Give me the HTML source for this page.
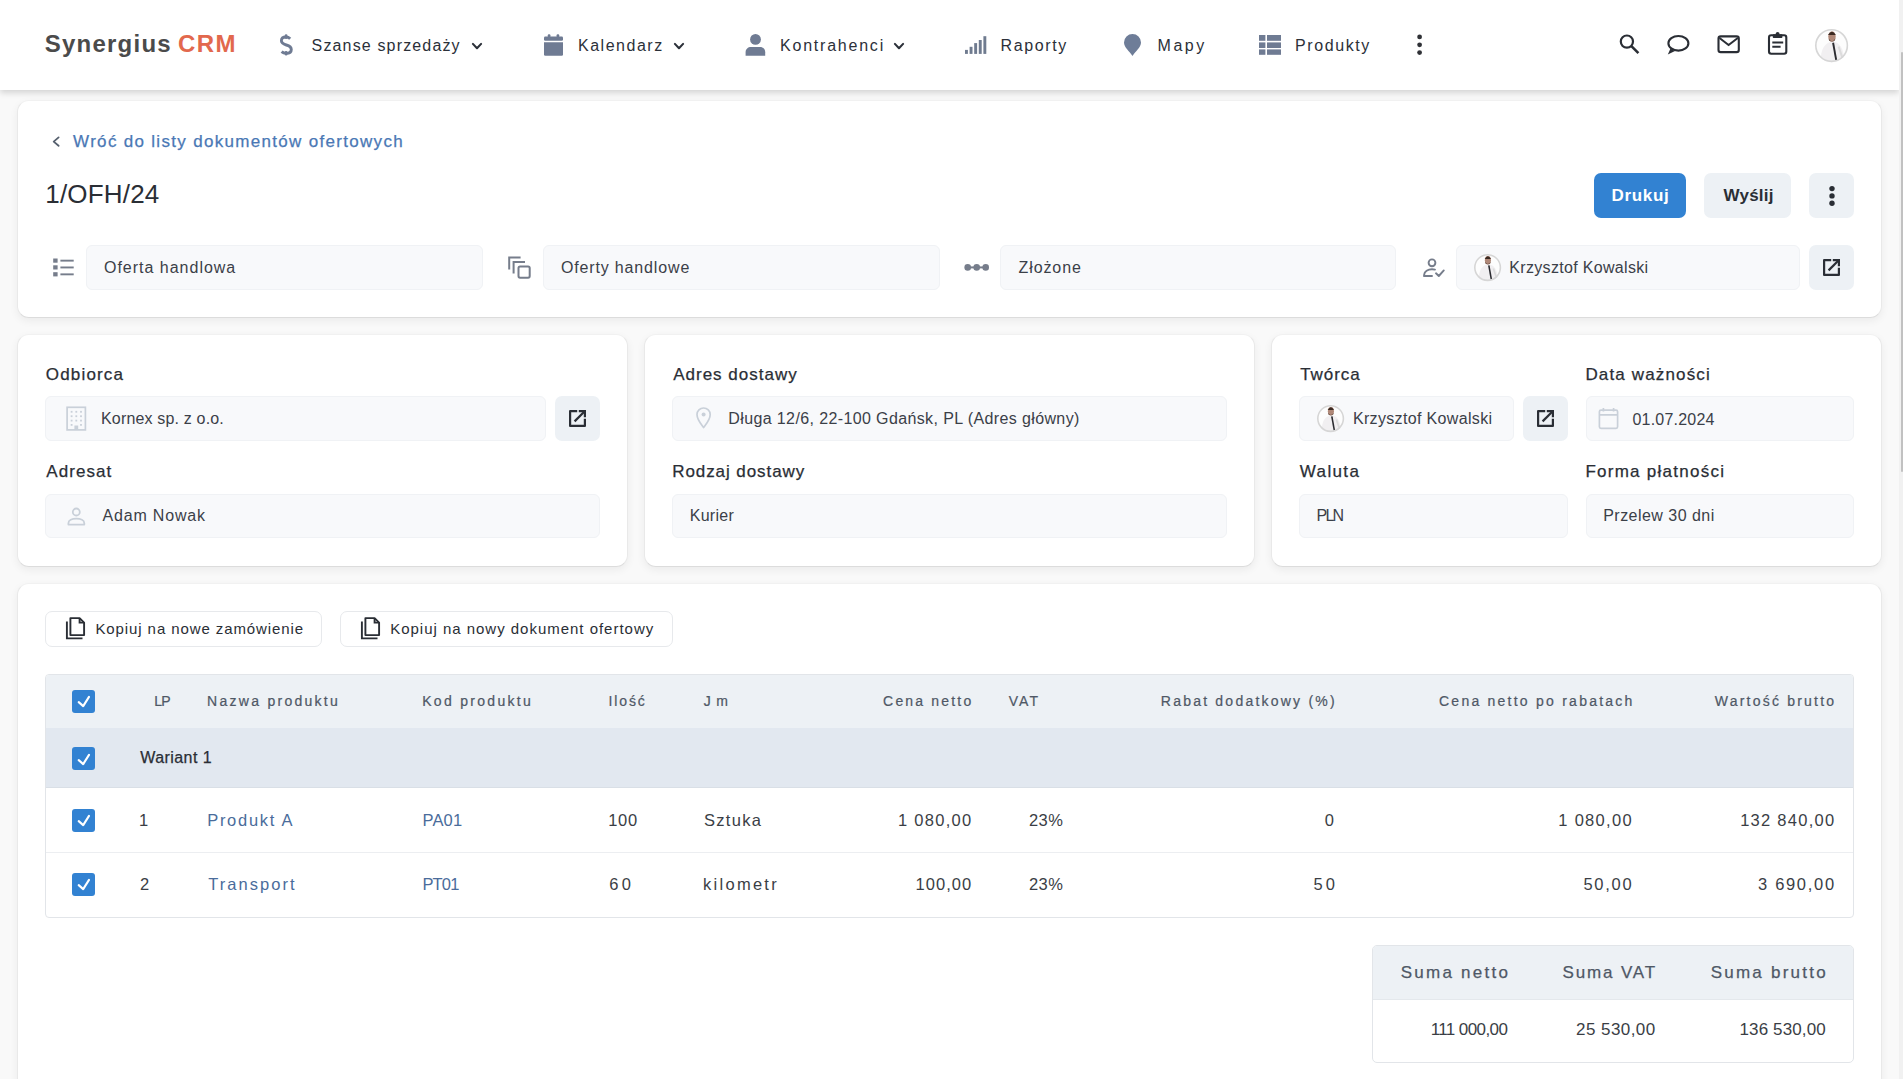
<!DOCTYPE html>
<html lang="pl">
<head>
<meta charset="utf-8">
<title>1/OFH/24 - Synergius CRM</title>
<style>
html,body{margin:0;padding:0;}
body{width:1903px;height:1079px;overflow:hidden;background:#f9f9f9;font-family:"Liberation Sans",sans-serif;position:relative;}
.a{position:absolute;box-sizing:border-box;}
.t{position:absolute;z-index:3;white-space:nowrap;line-height:1;font-family:"Liberation Sans",sans-serif;}
.hdr{left:0;top:0;width:1899px;height:90px;background:#fff;box-shadow:0 3px 6px rgba(0,0,0,0.15);z-index:2;}
.card{background:#fff;border:1px solid #e9e9e9;border-top-color:#f1f1f1;border-bottom-color:#dcdcdc;border-radius:12px;box-shadow:0 3px 8px rgba(0,0,0,0.06);}
.inp{background:#f8f9fb;border:1px solid #f0f2f5;border-radius:6px;}
.gbtn{background:#edf1f5;border-radius:6px;}
.cb{width:23px;height:23px;background:#3282d2;border-radius:3px;}
svg{position:absolute;overflow:visible;z-index:3;}
</style>
</head>
<body>
<!-- header -->
<div class="a hdr"></div>
<div class="a" style="left:1899px;top:0;width:4px;height:1079px;background:#f1f1f1;z-index:5"></div>
<div class="a" style="left:1901px;top:52px;width:2px;height:420px;background:#c1c1c1;border-radius:1px;z-index:6"></div>

<!-- cards -->
<div class="a card" style="left:17px;top:100px;width:1865px;height:218px"></div>
<div class="a card" style="left:17px;top:334px;width:611px;height:233px"></div>
<div class="a card" style="left:644px;top:334px;width:611px;height:233px"></div>
<div class="a card" style="left:1271px;top:334px;width:611px;height:233px"></div>
<div class="a card" style="left:17px;top:583px;width:1865px;height:600px"></div>

<!-- card1 buttons -->
<div class="a" style="left:1594px;top:173px;width:92px;height:45px;background:#3282d2;border-radius:7px"></div>
<div class="a gbtn" style="left:1704px;top:173px;width:87px;height:45px;border-radius:7px"></div>
<div class="a gbtn" style="left:1809px;top:173px;width:45px;height:45px;border-radius:7px"></div>
<!-- card1 inputs -->
<div class="a inp" style="left:86px;top:245px;width:397px;height:45px"></div>
<div class="a inp" style="left:543px;top:245px;width:397px;height:45px"></div>
<div class="a inp" style="left:1000px;top:245px;width:396px;height:45px"></div>
<div class="a inp" style="left:1456px;top:245px;width:344px;height:45px"></div>
<div class="a gbtn" style="left:1809px;top:245px;width:45px;height:45px;border-radius:7px"></div>

<!-- cards2 inputs -->
<div class="a inp" style="left:45px;top:396px;width:501px;height:45px"></div>
<div class="a gbtn" style="left:555px;top:396px;width:45px;height:45px;border-radius:7px"></div>
<div class="a inp" style="left:45px;top:494px;width:555px;height:44px"></div>
<div class="a inp" style="left:672px;top:396px;width:555px;height:45px"></div>
<div class="a inp" style="left:672px;top:494px;width:555px;height:44px"></div>
<div class="a inp" style="left:1299px;top:396px;width:215px;height:45px"></div>
<div class="a gbtn" style="left:1523px;top:396px;width:45px;height:45px;border-radius:7px"></div>
<div class="a inp" style="left:1586px;top:396px;width:268px;height:45px"></div>
<div class="a inp" style="left:1299px;top:494px;width:269px;height:44px"></div>
<div class="a inp" style="left:1586px;top:494px;width:268px;height:44px"></div>

<!-- card3 buttons -->
<div class="a" style="left:45px;top:611px;width:277px;height:36px;background:#fff;border:1px solid #e7e9ec;border-radius:7px"></div>
<div class="a" style="left:340px;top:611px;width:333px;height:36px;background:#fff;border:1px solid #e7e9ec;border-radius:7px"></div>

<!-- table -->
<div class="a" style="left:45px;top:674px;width:1809px;height:244px;border:1px solid #e2e5e9;border-radius:4px;overflow:hidden;background:#fff">
  <div class="a" style="left:0;top:0;width:100%;height:53px;background:#edf1f5"></div>
  <div class="a" style="left:0;top:53px;width:100%;height:60px;background:#e2e8f0;border-bottom:1px solid #d9dfe6"></div>
  <div class="a" style="left:0;top:177px;width:100%;height:1px;background:#eceef1"></div>
</div>
<div class="a cb" style="left:72px;top:690px"></div>
<div class="a cb" style="left:72px;top:747px"></div>
<div class="a cb" style="left:72px;top:809px"></div>
<div class="a cb" style="left:72px;top:873px"></div>

<!-- summary -->
<div class="a" style="left:1372px;top:945px;width:482px;height:118px;border:1px solid #e2e5e9;border-radius:5px;overflow:hidden;background:#fff">
  <div class="a" style="left:0;top:0;width:100%;height:54px;background:#edf1f5;border-bottom:1px solid #e4e8ec"></div>
</div>

<svg style="left:277px;top:32px;" width="18" height="26" viewBox="277 32 18 26"><path d="M290.2,38.8 C288.8,37.4 287.4,37 285.9,37 C283.1,37 281.4,38.6 281.4,40.8 C281.4,43.3 283.6,44.2 286.3,45 C289.4,45.9 291.3,47 291.3,49.4 C291.3,51.9 289.3,53.2 286.3,53.2 C284.4,53.2 282.8,52.7 281.6,51.6" fill="none" stroke="#6f7b93" stroke-width="2.9" stroke-linecap="butt"/><path d="M286.1,35.6 V37.5 M286.1,52.5 V54.2" stroke="#6f7b93" stroke-width="2.8" stroke-linecap="round"/></svg>
<svg style="left:470.7px;top:41.5px;" width="12" height="8" viewBox="470.7 41.5 12 8"><path d="M472.59999999999997,43.4 L476.7,47.7 L480.8,43.4" fill="none" stroke="#2b3039" stroke-width="2.1" stroke-linecap="round" stroke-linejoin="round"/></svg>
<svg style="left:672.5px;top:41.5px;" width="12" height="8" viewBox="672.5 41.5 12 8"><path d="M674.4,43.4 L678.5,47.7 L682.6,43.4" fill="none" stroke="#2b3039" stroke-width="2.1" stroke-linecap="round" stroke-linejoin="round"/></svg>
<svg style="left:893px;top:41.5px;" width="12" height="8" viewBox="893 41.5 12 8"><path d="M894.9,43.4 L899,47.7 L903.1,43.4" fill="none" stroke="#2b3039" stroke-width="2.1" stroke-linecap="round" stroke-linejoin="round"/></svg>
<svg style="left:543px;top:33px;" width="22" height="24" viewBox="543 33 22 24"><rect x="544" y="36.6" width="19" height="4.2" rx="1.2" fill="#6f7b93"/><path d="M544,42.2 H563 V54.5 Q563,55.8 561.7,55.8 H545.3 Q544,55.8 544,54.5 Z" fill="#6f7b93"/><rect x="547.8" y="34.2" width="2.6" height="4" rx="1" fill="#6f7b93"/><rect x="556.6" y="34.2" width="2.6" height="4" rx="1" fill="#6f7b93"/></svg>
<svg style="left:744px;top:33px;" width="23" height="24" viewBox="744 33 23 24"><circle cx="755.5" cy="39.4" r="5.4" fill="#6f7b93"/><path d="M745.6,55.8 V52.2 C745.6,49 748,47 751,47 H760 C763,47 765.2,49 765.2,52.2 V55.8 Z" fill="#6f7b93"/></svg>
<svg style="left:964px;top:35px;" width="24" height="20" viewBox="964 35 24 20"><rect x="965.0" y="49.9" width="2.9" height="4.0" fill="#6f7b8f"/><rect x="969.6" y="46.8" width="2.9" height="7.1" fill="#6f7b8f"/><rect x="974.2" y="43.1" width="2.9" height="10.8" fill="#6f7b8f"/><rect x="978.8" y="40.0" width="2.9" height="13.9" fill="#6f7b8f"/><rect x="983.4" y="36.2" width="2.9" height="17.7" fill="#6f7b8f"/></svg>
<svg style="left:1122px;top:33px;" width="21" height="24" viewBox="1122 33 21 24"><path d="M1132.5,55.9 C1129.5,51.5 1124,47.5 1124,42.6 A8.5,8.5 0 1 1 1141,42.6 C1141,47.5 1135.5,51.5 1132.5,55.9 Z" fill="#6e7d98"/></svg>
<svg style="left:1258px;top:34px;" width="25" height="22" viewBox="1258 34 25 22"><rect x="1259" y="35" width="6.4" height="5.8" fill="#6f7b93"/><rect x="1267" y="35" width="14" height="5.8" fill="#6f7b93"/><rect x="1259" y="42.4" width="6.4" height="5.6" fill="#6f7b93"/><rect x="1267" y="42.4" width="14" height="5.6" fill="#6f7b93"/><rect x="1259" y="49.4" width="6.4" height="5.4" fill="#6f7b93"/><rect x="1267" y="49.4" width="14" height="5.4" fill="#6f7b93"/></svg>
<svg style="left:1415px;top:33px;" width="9" height="23" viewBox="1415 33 9 23"><circle cx="1419.6" cy="36.9" r="2.4" fill="#2f3136"/><circle cx="1419.6" cy="44.8" r="2.4" fill="#2f3136"/><circle cx="1419.6" cy="52.6" r="2.4" fill="#2f3136"/></svg>
<svg style="left:1617px;top:32px;" width="25" height="25" viewBox="1617 32 25 25"><circle cx="1626.9" cy="41.6" r="6.1" fill="none" stroke="#2a2e35" stroke-width="2.2"/><path d="M1631.4,46.1 L1638.4,53.1" stroke="#2a2e35" stroke-width="2.6"/></svg>
<svg style="left:1665px;top:33px;" width="27" height="24" viewBox="1665 33 27 24"><ellipse cx="1678.4" cy="43.3" rx="10" ry="7.3" fill="none" stroke="#2a2e35" stroke-width="2.1"/><path d="M1670.5,48.5 L1667.8,54.4 L1675,50.9 Z" fill="#2a2e35"/></svg>
<svg style="left:1716px;top:34px;" width="26" height="21" viewBox="1716 34 26 21"><rect x="1718.5" y="36.4" width="20.3" height="15.7" rx="2.2" fill="none" stroke="#2a2e35" stroke-width="2.1"/><path d="M1719.5,38 L1728.6,45 L1737.8,38" fill="none" stroke="#2a2e35" stroke-width="2"/></svg>
<svg style="left:1766px;top:31px;" width="23" height="26" viewBox="1766 31 23 26"><rect x="1769" y="35.3" width="17.3" height="18.4" rx="2.2" fill="none" stroke="#2a2e35" stroke-width="2.1"/><rect x="1772.8" y="34.2" width="9.6" height="3.8" rx="0.8" fill="#2a2e35"/><circle cx="1777.6" cy="33.8" r="1.9" fill="#2a2e35"/><path d="M1772.3,42.5 H1783.2 M1772.3,46.8 H1780.6" stroke="#2a2e35" stroke-width="1.9"/></svg>
<svg style="left:1814.4px;top:27.699999999999996px;" width="35.2" height="35.2" viewBox="1814.4 27.699999999999996 35.2 35.2"><defs><clipPath id="av183245"><circle cx="1832" cy="45.3" r="16.6"/></clipPath></defs><circle cx="1832" cy="45.3" r="16.6" fill="#fdfdfd"/><g clip-path="url(#av183245)"><path d="M1820.9333333333334,62.403030303030306 C1820.9333333333334,47.31212121212121 1825.9636363636364,42.28181818181818 1833.0060606060606,41.275757575757574 C1840.0484848484848,42.28181818181818 1844.0727272727272,47.31212121212121 1845.0787878787878,62.403030303030306 Z" fill="#f1eff1"/><path d="M1839.0424242424242,46.306060606060605 L1843.0666666666666,58.378787878787875" stroke="#dcdcdc" stroke-width="2.012121212121212"/><ellipse cx="1832.4024242424243" cy="36.24545454545454" rx="3.7224242424242426" ry="5.231515151515152" fill="#b08878"/><path d="M1828.378181818182,34.736363636363635 Q1832.4024242424243,28.196969696969692 1836.2254545454546,34.736363636363635 Z" fill="#3b2a22"/><path d="M1828.9818181818182,38.25757575757575 Q1832.4024242424243,43.79090909090909 1835.8230303030302,38.25757575757575 L1835.0181818181818,40.269696969696966 Q1832.4024242424243,42.28181818181818 1829.5854545454545,40.269696969696966 Z" fill="#4a362c"/><path d="M1833.509090909091,42.4830303030303 L1836.627878787879,59.88787878787878" stroke="#2b2b30" stroke-width="1.9115151515151514"/></g><circle cx="1832" cy="45.3" r="15.8" fill="none" stroke="#d6d6d6" stroke-width="1.6"/></svg>
<svg style="left:51px;top:135px;" width="10" height="13" viewBox="51 135 10 13"><path d="M58.6,137.4 L53.7,141.6 L58.6,145.8" fill="none" stroke="#56606e" stroke-width="1.8" stroke-linecap="round" stroke-linejoin="round"/></svg>
<svg style="left:1828px;top:184px;" width="9" height="23" viewBox="1828 184 9 23"><circle cx="1832" cy="188.6" r="2.7" fill="#2a2e35"/><circle cx="1832" cy="195.9" r="2.7" fill="#2a2e35"/><circle cx="1832" cy="203.2" r="2.7" fill="#2a2e35"/></svg>
<svg style="left:52px;top:257px;" width="23" height="21" viewBox="52 257 23 21"><rect x="53.2" y="258.5" width="4.4" height="4.2" fill="#767d8b"/><rect x="60.4" y="259.7" width="13.3" height="1.9" fill="#767d8b"/><rect x="53.2" y="265.3" width="4.4" height="4.2" fill="#767d8b"/><rect x="60.4" y="266.5" width="13.3" height="1.9" fill="#767d8b"/><rect x="53.2" y="272.2" width="4.4" height="4.2" fill="#767d8b"/><rect x="60.4" y="273.4" width="13.3" height="1.9" fill="#767d8b"/></svg>
<svg style="left:506px;top:254px;" width="27" height="27" viewBox="506 254 27 27"><rect x="518.5" y="266.5" width="11.2" height="11.2" rx="1.6" fill="none" stroke="#767d8b" stroke-width="2"/><path d="M513.6,273.5 V262 H525" fill="none" stroke="#767d8b" stroke-width="2"/><path d="M509.2,269.5 V257.5 H520.6" fill="none" stroke="#767d8b" stroke-width="2"/></svg>
<svg style="left:963px;top:262px;" width="28" height="11" viewBox="963 262 28 11"><path d="M967.7,267.4 H985.7" stroke="#767d8b" stroke-width="2"/><circle cx="967.7" cy="267.4" r="3.3" fill="#767d8b"/><circle cx="976.7" cy="267.4" r="3.3" fill="#767d8b"/><circle cx="985.7" cy="267.4" r="3.3" fill="#767d8b"/></svg>
<svg style="left:1421px;top:257px;" width="26" height="22" viewBox="1421 257 26 22"><circle cx="1432" cy="262.8" r="3.4" fill="none" stroke="#767d8b" stroke-width="1.9"/><path d="M1424.2,276 V274.6 C1424.2,271.3 1428,269.3 1432,269.3 C1433.3,269.3 1434.2,269.4 1435,269.6" fill="none" stroke="#767d8b" stroke-width="1.9" stroke-linecap="round"/><path d="M1424.2,276 H1432" stroke="#767d8b" stroke-width="1.9" stroke-linecap="round"/><path d="M1436,273.3 L1438.8,276 L1443.8,270.4" fill="none" stroke="#767d8b" stroke-width="1.9" stroke-linecap="round" stroke-linejoin="round"/></svg>
<svg style="left:1472.9px;top:252.9px;" width="29.2" height="29.2" viewBox="1472.9 252.9 29.2 29.2"><defs><clipPath id="av1487267"><circle cx="1487.5" cy="267.5" r="13.6"/></clipPath></defs><circle cx="1487.5" cy="267.5" r="13.6" fill="#fdfdfd"/><g clip-path="url(#av1487267)"><path d="M1478.4333333333334,281.5121212121212 C1478.4333333333334,269.1484848484848 1482.5545454545454,265.0272727272727 1488.3242424242424,264.2030303030303 C1494.0939393939393,265.0272727272727 1497.3909090909092,269.1484848484848 1498.2151515151515,281.5121212121212 Z" fill="#f1eff1"/><path d="M1493.269696969697,268.3242424242424 L1496.5666666666666,278.2151515151515" stroke="#dcdcdc" stroke-width="1.6484848484848484"/><ellipse cx="1487.829696969697" cy="260.08181818181816" rx="3.04969696969697" ry="4.286060606060606" fill="#b08878"/><path d="M1484.5327272727272,258.8454545454546 Q1487.829696969697,253.4878787878788 1490.9618181818182,258.8454545454546 Z" fill="#3b2a22"/><path d="M1485.0272727272727,261.73030303030305 Q1487.829696969697,266.26363636363635 1490.6321212121213,261.73030303030305 L1489.9727272727273,263.3787878787879 Q1487.829696969697,265.0272727272727 1485.5218181818182,263.3787878787879 Z" fill="#4a362c"/><path d="M1488.7363636363636,265.1921212121212 L1491.2915151515151,279.45151515151514" stroke="#2b2b30" stroke-width="1.566060606060606"/></g><circle cx="1487.5" cy="267.5" r="12.799999999999999" fill="none" stroke="#d6d6d6" stroke-width="1.6"/></svg>
<svg style="left:1820.8px;top:256.6px;" width="21" height="21" viewBox="1820.8 256.6 21 21"><path d="M1831.0,259.70000000000005 H1823.8999999999999 V274.5 H1838.7 V267.40000000000003" fill="none" stroke="#2a2e35" stroke-width="2.2" stroke-linejoin="round"/><path d="M1828.3999999999999,270.0 L1838.0,260.40000000000003" stroke="#2a2e35" stroke-width="2.2" fill="none"/><path d="M1832.6,259.70000000000005 H1838.7 V265.8" stroke="#2a2e35" stroke-width="2.2" fill="none"/></svg>
<svg style="left:65px;top:405px;" width="23" height="27" viewBox="65 405 23 27"><rect x="67.1" y="407.3" width="18.3" height="22.6" fill="none" stroke="#c9d0d9" stroke-width="1.7"/><rect x="70.7" y="410.9" width="1.8" height="1.8" fill="#c9d0d9"/><rect x="75.4" y="410.9" width="1.8" height="1.8" fill="#c9d0d9"/><rect x="80.1" y="410.9" width="1.8" height="1.8" fill="#c9d0d9"/><rect x="70.7" y="415.3" width="1.8" height="1.8" fill="#c9d0d9"/><rect x="75.4" y="415.3" width="1.8" height="1.8" fill="#c9d0d9"/><rect x="80.1" y="415.3" width="1.8" height="1.8" fill="#c9d0d9"/><rect x="70.7" y="419.7" width="1.8" height="1.8" fill="#c9d0d9"/><rect x="75.4" y="419.7" width="1.8" height="1.8" fill="#c9d0d9"/><rect x="80.1" y="419.7" width="1.8" height="1.8" fill="#c9d0d9"/><rect x="70.7" y="424.0" width="1.8" height="1.8" fill="#c9d0d9"/><rect x="80.1" y="424.0" width="1.8" height="1.8" fill="#c9d0d9"/><rect x="74.4" y="425.5" width="3.8" height="4.5" fill="#c9d0d9"/></svg>
<svg style="left:566.9px;top:407.6px;" width="21" height="21" viewBox="566.9 407.6 21 21"><path d="M577.1,410.70000000000005 H570.0 V425.5 H584.8 V418.40000000000003" fill="none" stroke="#2a2e35" stroke-width="2.2" stroke-linejoin="round"/><path d="M574.5,421.0 L584.1,411.40000000000003" stroke="#2a2e35" stroke-width="2.2" fill="none"/><path d="M578.6999999999999,410.70000000000005 H584.8 V416.8" stroke="#2a2e35" stroke-width="2.2" fill="none"/></svg>
<svg style="left:66px;top:506px;" width="21" height="21" viewBox="66 506 21 21"><circle cx="76.3" cy="512" r="3.5" fill="none" stroke="#c9d0d9" stroke-width="1.8"/><path d="M68.4,524.6 V523.2 C68.4,520.4 72,518.7 76.3,518.7 C80.6,518.7 84.3,520.4 84.3,523.2 V524.6 Z" fill="none" stroke="#c9d0d9" stroke-width="1.8" stroke-linejoin="round"/></svg>
<svg style="left:694px;top:406px;" width="20" height="24" viewBox="694 406 20 24"><path d="M703.6,427.6 C701.5,424.5 697,420 697,414.6 A6.6,6.6 0 1 1 710.2,414.6 C710.2,420 705.7,424.5 703.6,427.6 Z" fill="none" stroke="#c9d0d9" stroke-width="1.7" stroke-linejoin="round"/><circle cx="703.6" cy="414.4" r="2" fill="#c9d0d9"/></svg>
<svg style="left:1315.9px;top:403.9px;" width="29.2" height="29.2" viewBox="1315.9 403.9 29.2 29.2"><defs><clipPath id="av1330418"><circle cx="1330.5" cy="418.5" r="13.6"/></clipPath></defs><circle cx="1330.5" cy="418.5" r="13.6" fill="#fdfdfd"/><g clip-path="url(#av1330418)"><path d="M1321.4333333333334,432.5121212121212 C1321.4333333333334,420.1484848484848 1325.5545454545454,416.0272727272727 1331.3242424242424,415.2030303030303 C1337.0939393939393,416.0272727272727 1340.3909090909092,420.1484848484848 1341.2151515151515,432.5121212121212 Z" fill="#f1eff1"/><path d="M1336.269696969697,419.3242424242424 L1339.5666666666666,429.2151515151515" stroke="#dcdcdc" stroke-width="1.6484848484848484"/><ellipse cx="1330.829696969697" cy="411.08181818181816" rx="3.04969696969697" ry="4.286060606060606" fill="#b08878"/><path d="M1327.5327272727272,409.8454545454546 Q1330.829696969697,404.4878787878788 1333.9618181818182,409.8454545454546 Z" fill="#3b2a22"/><path d="M1328.0272727272727,412.73030303030305 Q1330.829696969697,417.26363636363635 1333.6321212121213,412.73030303030305 L1332.9727272727273,414.3787878787879 Q1330.829696969697,416.0272727272727 1328.5218181818182,414.3787878787879 Z" fill="#4a362c"/><path d="M1331.7363636363636,416.1921212121212 L1334.2915151515151,430.45151515151514" stroke="#2b2b30" stroke-width="1.566060606060606"/></g><circle cx="1330.5" cy="418.5" r="12.799999999999999" fill="none" stroke="#d6d6d6" stroke-width="1.6"/></svg>
<svg style="left:1535.2px;top:407.9px;" width="21" height="21" viewBox="1535.2 407.9 21 21"><path d="M1545.4,411.0 H1538.3 V425.79999999999995 H1553.1000000000001 V418.7" fill="none" stroke="#2a2e35" stroke-width="2.2" stroke-linejoin="round"/><path d="M1542.8,421.29999999999995 L1552.4,411.7" stroke="#2a2e35" stroke-width="2.2" fill="none"/><path d="M1547.0,411.0 H1553.1000000000001 V417.09999999999997" stroke="#2a2e35" stroke-width="2.2" fill="none"/></svg>
<svg style="left:1597px;top:406px;" width="23" height="25" viewBox="1597 406 23 25"><rect x="1599.4" y="410.2" width="18.2" height="18.2" rx="1.6" fill="none" stroke="#c9d0d9" stroke-width="1.7"/><path d="M1599.4,414.8 H1617.6 M1603.4,407.9 V411.5 M1613.6,407.9 V411.5" stroke="#c9d0d9" stroke-width="1.7"/></svg>
<svg style="left:64px;top:615.2px;" width="24" height="27" viewBox="64 615.2 24 27"><path d="M70.4,618.3000000000001 H79.6 L84.1,622.8000000000001 V635.3000000000001 H70.4 Z" fill="none" stroke="#2a2e35" stroke-width="1.9" stroke-linejoin="round"/><path d="M79.6,618.3000000000001 V622.8000000000001 H84.1" fill="none" stroke="#2a2e35" stroke-width="1.9"/><path d="M66.9,621.7 V638.6 H82.5" fill="none" stroke="#2a2e35" stroke-width="1.9"/></svg>
<svg style="left:359px;top:615.2px;" width="24" height="27" viewBox="359 615.2 24 27"><path d="M365.4,618.3000000000001 H374.6 L379.1,622.8000000000001 V635.3000000000001 H365.4 Z" fill="none" stroke="#2a2e35" stroke-width="1.9" stroke-linejoin="round"/><path d="M374.6,618.3000000000001 V622.8000000000001 H379.1" fill="none" stroke="#2a2e35" stroke-width="1.9"/><path d="M361.9,621.7 V638.6 H377.5" fill="none" stroke="#2a2e35" stroke-width="1.9"/></svg>
<svg style="left:72.3px;top:690px;" width="22" height="22" viewBox="72.3 690 22 22"><path d="M79.0,702.1 L83.5,706.1 L89.3,696.9" fill="none" stroke="#fff" stroke-width="2.1" stroke-linecap="round" stroke-linejoin="round"/></svg>
<svg style="left:72.3px;top:747.5px;" width="22" height="22" viewBox="72.3 747.5 22 22"><path d="M79.0,759.6 L83.5,763.6 L89.3,754.4" fill="none" stroke="#fff" stroke-width="2.1" stroke-linecap="round" stroke-linejoin="round"/></svg>
<svg style="left:72.3px;top:809px;" width="22" height="22" viewBox="72.3 809 22 22"><path d="M79.0,821.1 L83.5,825.1 L89.3,815.9" fill="none" stroke="#fff" stroke-width="2.1" stroke-linecap="round" stroke-linejoin="round"/></svg>
<svg style="left:72.3px;top:873px;" width="22" height="22" viewBox="72.3 873 22 22"><path d="M79.0,885.1 L83.5,889.1 L89.3,879.9" fill="none" stroke="#fff" stroke-width="2.1" stroke-linecap="round" stroke-linejoin="round"/></svg>

<span class="t" style="left:44.7px;top:31.7px;font-size:24px;color:#4b4b4b;letter-spacing:1.24px;font-weight:700">Synergius</span>
<span class="t" style="left:178.1px;top:31.7px;font-size:24px;color:#e2684d;letter-spacing:1.42px;font-weight:700">CRM</span>
<span class="t" style="left:311.6px;top:37.5px;font-size:16px;color:#2b3039;letter-spacing:1.15px">Szanse sprzedaży</span>
<span class="t" style="left:578.0px;top:37.5px;font-size:16px;color:#2b3039;letter-spacing:1.52px">Kalendarz</span>
<span class="t" style="left:780.0px;top:37.5px;font-size:16px;color:#2b3039;letter-spacing:1.78px">Kontrahenci</span>
<span class="t" style="left:1000.5px;top:37.5px;font-size:16px;color:#2b3039;letter-spacing:1.63px">Raporty</span>
<span class="t" style="left:1157.5px;top:37.5px;font-size:16px;color:#2b3039;letter-spacing:2.56px">Mapy</span>
<span class="t" style="left:1295.0px;top:37.5px;font-size:16px;color:#2b3039;letter-spacing:1.59px">Produkty</span>
<span class="t" style="left:73.1px;top:132.6px;font-size:17px;color:#4a78b5;letter-spacing:1.31px;-webkit-text-stroke:0.25px currentColor">Wróć do listy dokumentów ofertowych</span>
<span class="t" style="left:45.3px;top:181.0px;font-size:26px;color:#2a2e35;letter-spacing:0.18px">1/OFH/24</span>
<span class="t" style="left:1611.6px;top:186.6px;font-size:17px;color:#ffffff;letter-spacing:0.66px;font-weight:700">Drukuj</span>
<span class="t" style="left:1723.5px;top:186.6px;font-size:17px;color:#2a2e35;letter-spacing:0.22px;font-weight:700">Wyślij</span>
<span class="t" style="left:104.0px;top:259.5px;font-size:16px;color:#3b4048;letter-spacing:0.99px">Oferta handlowa</span>
<span class="t" style="left:560.9px;top:259.5px;font-size:16px;color:#3b4048;letter-spacing:0.85px">Oferty handlowe</span>
<span class="t" style="left:1018.5px;top:259.5px;font-size:16px;color:#3b4048;letter-spacing:0.91px">Złożone</span>
<span class="t" style="left:1509.3px;top:259.5px;font-size:16px;color:#3b4048;letter-spacing:0.32px">Krzysztof Kowalski</span>
<span class="t" style="left:45.8px;top:365.6px;font-size:17px;color:#2a2e35;letter-spacing:1.17px;-webkit-text-stroke:0.25px currentColor">Odbiorca</span>
<span class="t" style="left:101.0px;top:411.0px;font-size:16px;color:#3b4048;letter-spacing:0.17px">Kornex sp. z o.o.</span>
<span class="t" style="left:46.3px;top:462.6px;font-size:17px;color:#2a2e35;letter-spacing:1.06px;-webkit-text-stroke:0.25px currentColor">Adresat</span>
<span class="t" style="left:102.5px;top:507.5px;font-size:16px;color:#3b4048;letter-spacing:0.82px">Adam Nowak</span>
<span class="t" style="left:673.2px;top:365.6px;font-size:17px;color:#2a2e35;letter-spacing:1.00px;-webkit-text-stroke:0.25px currentColor">Adres dostawy</span>
<span class="t" style="left:728.3px;top:411.0px;font-size:16px;color:#3b4048;letter-spacing:0.38px">Długa 12/6, 22-100 Gdańsk, PL (Adres główny)</span>
<span class="t" style="left:672.2px;top:462.6px;font-size:17px;color:#2a2e35;letter-spacing:0.93px;-webkit-text-stroke:0.25px currentColor">Rodzaj dostawy</span>
<span class="t" style="left:689.7px;top:507.5px;font-size:16px;color:#3b4048;letter-spacing:0.27px">Kurier</span>
<span class="t" style="left:1300.2px;top:365.6px;font-size:17px;color:#2a2e35;letter-spacing:0.93px;-webkit-text-stroke:0.25px currentColor">Twórca</span>
<span class="t" style="left:1352.9px;top:411.0px;font-size:16px;color:#3b4048;letter-spacing:0.34px">Krzysztof Kowalski</span>
<span class="t" style="left:1585.4px;top:365.6px;font-size:17px;color:#2a2e35;letter-spacing:1.15px;-webkit-text-stroke:0.25px currentColor">Data ważności</span>
<span class="t" style="left:1632.5px;top:411.5px;font-size:16px;color:#3b4048;letter-spacing:0.20px">01.07.2024</span>
<span class="t" style="left:1299.8px;top:462.6px;font-size:17px;color:#2a2e35;letter-spacing:1.36px;-webkit-text-stroke:0.25px currentColor">Waluta</span>
<span class="t" style="left:1316.6px;top:507.5px;font-size:16px;color:#3b4048;letter-spacing:-1.79px">PLN</span>
<span class="t" style="left:1585.4px;top:462.6px;font-size:17px;color:#2a2e35;letter-spacing:1.26px;-webkit-text-stroke:0.25px currentColor">Forma płatności</span>
<span class="t" style="left:1603.2px;top:507.5px;font-size:16px;color:#3b4048;letter-spacing:0.47px">Przelew 30 dni</span>
<span class="t" style="left:95.4px;top:621.3px;font-size:15px;color:#2a2e35;letter-spacing:0.91px">Kopiuj na nowe zamówienie</span>
<span class="t" style="left:390.2px;top:621.3px;font-size:15px;color:#2a2e35;letter-spacing:0.98px">Kopiuj na nowy dokument ofertowy</span>
<span class="t" style="left:154.3px;top:694.1px;font-size:14px;color:#4f5866;letter-spacing:-0.79px;-webkit-text-stroke:0.22px currentColor">LP</span>
<span class="t" style="left:207.1px;top:694.1px;font-size:14px;color:#4f5866;letter-spacing:2.27px;-webkit-text-stroke:0.22px currentColor">Nazwa produktu</span>
<span class="t" style="left:422.2px;top:694.1px;font-size:14px;color:#4f5866;letter-spacing:2.30px;-webkit-text-stroke:0.22px currentColor">Kod produktu</span>
<span class="t" style="left:608.4px;top:694.1px;font-size:14px;color:#4f5866;letter-spacing:1.90px;-webkit-text-stroke:0.22px currentColor">Ilość</span>
<span class="t" style="left:703.7px;top:694.1px;font-size:14px;color:#4f5866;letter-spacing:5.60px;-webkit-text-stroke:0.22px currentColor">Jm</span>
<span class="t" style="left:883.1px;top:694.1px;font-size:14px;color:#4f5866;letter-spacing:2.18px;-webkit-text-stroke:0.22px currentColor">Cena netto</span>
<span class="t" style="left:1008.7px;top:694.1px;font-size:14px;color:#4f5866;letter-spacing:2.10px;-webkit-text-stroke:0.22px currentColor">VAT</span>
<span class="t" style="left:1160.8px;top:694.1px;font-size:14px;color:#4f5866;letter-spacing:2.22px;-webkit-text-stroke:0.22px currentColor">Rabat dodatkowy (%)</span>
<span class="t" style="left:1439.0px;top:694.1px;font-size:14px;color:#4f5866;letter-spacing:2.24px;-webkit-text-stroke:0.22px currentColor">Cena netto po rabatach</span>
<span class="t" style="left:1714.8px;top:694.1px;font-size:14px;color:#4f5866;letter-spacing:2.21px;-webkit-text-stroke:0.22px currentColor">Wartość brutto</span>
<span class="t" style="left:140.3px;top:749.5px;font-size:16px;color:#2a2e35;letter-spacing:0.42px;-webkit-text-stroke:0.25px currentColor">Wariant 1</span>
<span class="t" style="left:139.1px;top:812.2px;font-size:16.5px;color:#3a3e45">1</span>
<span class="t" style="left:207.2px;top:812.2px;font-size:16.5px;color:#4a6c9b;letter-spacing:1.71px">Produkt A</span>
<span class="t" style="left:422.4px;top:812.2px;font-size:16.5px;color:#4a6c9b;letter-spacing:0.21px">PA01</span>
<span class="t" style="left:608.3px;top:812.2px;font-size:16.5px;color:#3a3e45;letter-spacing:0.62px">100</span>
<span class="t" style="left:704.0px;top:812.2px;font-size:16.5px;color:#3a3e45;letter-spacing:1.29px">Sztuka</span>
<span class="t" style="left:898.0px;top:812.2px;font-size:16.5px;color:#3a3e45;letter-spacing:1.28px">1 080,00</span>
<span class="t" style="left:1029.0px;top:812.2px;font-size:16.5px;color:#3a3e45;letter-spacing:0.42px">23%</span>
<span class="t" style="left:1324.7px;top:812.2px;font-size:16.5px;color:#3a3e45">0</span>
<span class="t" style="left:1558.3px;top:812.2px;font-size:16.5px;color:#3a3e45;letter-spacing:1.29px">1 080,00</span>
<span class="t" style="left:1740.2px;top:812.2px;font-size:16.5px;color:#3a3e45;letter-spacing:1.26px">132 840,00</span>
<span class="t" style="left:140.0px;top:876.0px;font-size:16.5px;color:#3a3e45">2</span>
<span class="t" style="left:208.2px;top:876.0px;font-size:16.5px;color:#4a6c9b;letter-spacing:2.05px">Transport</span>
<span class="t" style="left:422.4px;top:876.0px;font-size:16.5px;color:#4a6c9b;letter-spacing:-0.82px">PT01</span>
<span class="t" style="left:609.3px;top:876.0px;font-size:16.5px;color:#3a3e45;letter-spacing:3.22px">60</span>
<span class="t" style="left:703.0px;top:876.0px;font-size:16.5px;color:#3a3e45;letter-spacing:2.28px">kilometr</span>
<span class="t" style="left:915.5px;top:876.0px;font-size:16.5px;color:#3a3e45;letter-spacing:1.04px">100,00</span>
<span class="t" style="left:1029.0px;top:876.0px;font-size:16.5px;color:#3a3e45;letter-spacing:0.42px">23%</span>
<span class="t" style="left:1313.5px;top:876.0px;font-size:16.5px;color:#3a3e45;letter-spacing:3.02px">50</span>
<span class="t" style="left:1583.4px;top:876.0px;font-size:16.5px;color:#3a3e45;letter-spacing:1.72px">50,00</span>
<span class="t" style="left:1758.0px;top:876.0px;font-size:16.5px;color:#3a3e45;letter-spacing:1.69px">3 690,00</span>
<span class="t" style="left:1400.7px;top:963.6px;font-size:17px;color:#4f5866;letter-spacing:2.25px;-webkit-text-stroke:0.25px currentColor">Suma netto</span>
<span class="t" style="left:1562.6px;top:963.6px;font-size:17px;color:#4f5866;letter-spacing:1.84px;-webkit-text-stroke:0.25px currentColor">Suma VAT</span>
<span class="t" style="left:1710.7px;top:963.6px;font-size:17px;color:#4f5866;letter-spacing:2.24px;-webkit-text-stroke:0.25px currentColor">Suma brutto</span>
<span class="t" style="left:1430.7px;top:1020.6px;font-size:17px;color:#3a3e45;letter-spacing:-0.60px">111 000,00</span>
<span class="t" style="left:1576.0px;top:1020.6px;font-size:17px;color:#3a3e45;letter-spacing:0.45px">25 530,00</span>
<span class="t" style="left:1739.5px;top:1020.6px;font-size:17px;color:#3a3e45;letter-spacing:0.12px">136 530,00</span>
</body>
</html>
